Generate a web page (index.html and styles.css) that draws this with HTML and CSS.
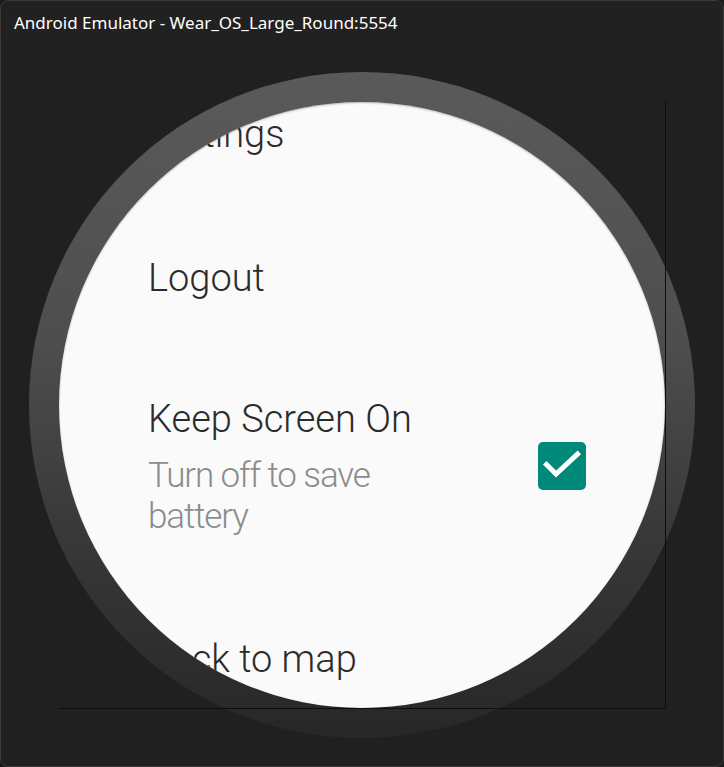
FILE: index.html
```html
<!DOCTYPE html>
<html>
<head>
<meta charset="utf-8">
<link rel="stylesheet" href="styles.css">
</head>
<body>
<div class="window">
  <div class="titlebar">Android Emulator - Wear_OS_Large_Round:5554</div>
  <div class="stage">
    <div class="bezel">
      <div class="frame">
        <div class="screen">
          <div class="list">
            <div class="item"><div class="title">Settings</div></div>
            <div class="item"><div class="title">Logout</div></div>
            <div class="item item-toggle">
              <div class="text">
                <div class="title">Keep Screen On</div>
                <div class="subtitle">Turn off to save<br>battery</div>
              </div>
              <div class="checkbox">
                <svg width="48" height="48" viewBox="0 0 48 48"><path d="M8.5 22.5 L18 32 L39.5 12" fill="none" stroke="#fff" stroke-width="5" stroke-linecap="square"/></svg>
              </div>
            </div>
            <div class="item"><div class="title">Back to map</div></div>
          </div>
        </div>
      </div>
    </div>
  </div>
</div>
</body>
</html>
```
FILE: styles.css
```css
html, body {
  margin: 0;
  padding: 0;
  background: #1a1a1a;
  width: 724px;
  height: 767px;
  overflow: hidden;
}
.window {
  box-sizing: border-box;
  width: 724px;
  height: 767px;
  background: #202020;
  border: 1px solid #3a3a3a;
  border-radius: 8px;
  display: flex;
  flex-direction: column;
  overflow: hidden;
}
.titlebar {
  height: 43px;
  flex: none;
  box-sizing: border-box;
  padding: 11px 0 0 13px;
  color: #ffffff;
  font-family: "Noto Sans", sans-serif;
  font-size: 17px;
  line-height: 22px;
  background: #212121;
}
.stage {
  flex: 1;
  display: flex;
  align-items: center;
  justify-content: center;
}
.bezel {
  width: 666px;
  height: 666px;
  border-radius: 50%;
  background: linear-gradient(#5a5a5a 0%, #4e4e4e 40%, #383838 70%, #272727 100%);
  display: flex;
  align-items: center;
  justify-content: center;
}
.frame {
  width: 606px;
  height: 606px;
  box-sizing: content-box;
  border-right: 1px solid #0d0d0d;
  border-bottom: 1px solid #0d0d0d;
  margin: 1px 0 0 1px;
}
.screen {
  width: 606px;
  height: 606px;
  border-radius: 50%;
  overflow: hidden;
  background: #fafafa;
  box-shadow: inset 0 1px 2px rgba(0,0,0,0.25);
}
.list {
  margin-top: -40px;
  font-family: Roboto, "Noto Sans", sans-serif;
  font-weight: 300;
}
.item {
  padding: 49px 79px 49px 89px;
  display: flex;
  align-items: center;
}
.item-toggle {
  padding-top: 46px;
  padding-bottom: 50px;
}
.title {
  font-size: 38px;
  line-height: 46px;
  color: #2b2b2b;
  white-space: nowrap;
}
.subtitle {
  margin-top: 13px;
  font-size: 35px;
  line-height: 41px;
  letter-spacing: -1.1px;
  color: #8c8c8c;
}
.text {
  flex: 1;
}
.checkbox {
  width: 48px;
  height: 48px;
  border-radius: 5px;
  background: #00897b;
  margin-bottom: 2px;
  flex: none;
}
.checkbox svg {
  display: block;
}
```
